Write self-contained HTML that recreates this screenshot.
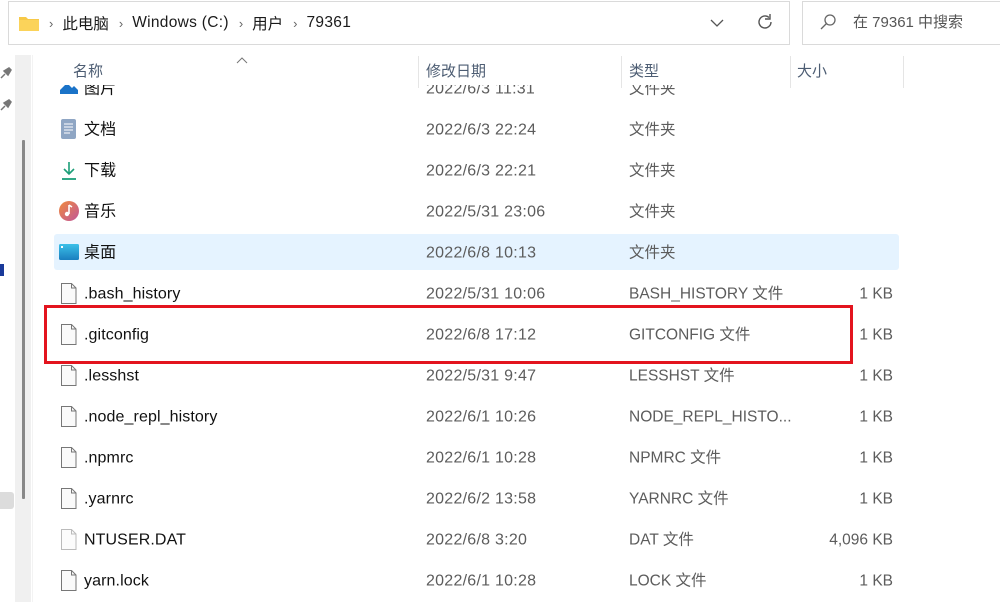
<!DOCTYPE html>
<html><head><meta charset="utf-8"><style>
*{margin:0;padding:0;box-sizing:border-box}
body{width:1000px;height:602px;overflow:hidden;background:#fff;position:relative;font-family:"Liberation Sans","Noto Sans CJK SC",sans-serif;font-size:15px;color:#1a1a1a}
.a{position:absolute}
.row{position:absolute;left:0;width:1000px;height:41px}
.row span{position:absolute;top:50%;transform:translateY(-48%);white-space:nowrap;line-height:20px}
.n{left:84px;color:#111;font-size:16px;letter-spacing:.1px}
.d{left:426px;color:#5c5c5c;font-size:16px;letter-spacing:.25px}
.t{left:629px;color:#5c5c5c;font-size:15.5px}
.s{right:107px;color:#5c5c5c;font-size:15.5px}
.ic{position:absolute;left:60px;top:10px}
.hd{color:#4d5d73;font-size:14px;line-height:20px}
.sep{position:absolute;top:56px;width:1px;height:32px;background:#e5e5e5}
.bc{position:absolute;left:19px;top:1px;height:44px;display:flex;align-items:center;white-space:nowrap;font-size:15.5px}
.bc .g{color:#666;font-size:13px;margin:0 9px 0 10px}
</style></head><body>
<div class="a" style="left:8px;top:1px;width:782px;height:44px;border:1px solid #dadada;background:#fff"></div>
<div class="bc"><svg width="20" height="16" viewBox="0 0 20 16"><path d="M0 2h7l2 2h11v12H0z" fill="#f7c948"/><path d="M0 5h20v11H0z" fill="#fbd35a"/></svg>
<span class="g">›</span><span>此电脑</span><span class="g">›</span><span style="letter-spacing:.3px">Windows (C:)</span><span class="g">›</span><span>用户</span><span class="g">›</span><span style="letter-spacing:.3px">79361</span></div>
<svg class="a" style="left:710px;top:18px" width="14" height="10"><path d="M1 2l6 6 6-6" fill="none" stroke="#555" stroke-width="1.3"/></svg>
<svg class="a" style="left:756px;top:13px" width="18" height="18" viewBox="0 0 18 18"><path d="M15 9a6 6 0 1 1-2-4.5" fill="none" stroke="#555" stroke-width="1.4"/><path d="M14 1v5h-5" fill="none" stroke="#555" stroke-width="1.4"/></svg>
<div class="a" style="left:802px;top:1px;width:210px;height:44px;border:1px solid #dadada"></div>
<svg class="a" style="left:819px;top:13px" width="18" height="18"><circle cx="11" cy="7" r="5" fill="none" stroke="#666" stroke-width="1.3"/><path d="M7.5 10.5L2 16" stroke="#666" stroke-width="1.3"/></svg>
<div class="a" style="left:853px;top:13px;color:#555;font-size:15px;line-height:20px">在 79361 中搜索</div>
<div class="a" style="left:15px;top:55px;width:16px;height:547px;background:#f0f0f0"></div>
<div class="a" style="left:22px;top:140px;width:3px;height:359px;background:#888;border-radius:1px"></div>
<div class="a" style="left:32px;top:55px;width:1px;height:547px;background:#f3f3f3"></div>
<div class="a" style="left:0;top:492px;width:14px;height:17px;background:#dcdcdc;border-radius:0 3px 3px 0"></div>
<div class="a" style="left:0;top:264px;width:4px;height:12px;background:#1a3a9a"></div>
<svg class="a" style="left:0;top:67px" width="12" height="12"><path d="M1 11l4-4M4 4l4 4 3-5-2-2z" stroke="#777" fill="#777" stroke-width="1.5"/></svg>
<svg class="a" style="left:0;top:99px" width="12" height="12"><path d="M1 11l4-4M4 4l4 4 3-5-2-2z" stroke="#777" fill="#777" stroke-width="1.5"/></svg>
<div class="row" style="top:68px"><svg class="ic" width="18" height="18"><path d="M0 12l7-7 5 5 2-2 4 4v4H0z" fill="#1a73c8"/></svg><span class="n">图片</span><span class="d">2022/6/3 11:31</span><span class="t">文件夹</span></div>
<div class="row" style="top:109px"><svg class="ic" width="18" height="20" style="left:61px"><rect x="0" y="0" width="15" height="20" rx="2" fill="#8fa6c4"/><path d="M3 5h9M3 8h9M3 11h9M3 14h6" stroke="#fff" stroke-width="1"/></svg><span class="n">文档</span><span class="d">2022/6/3 22:24</span><span class="t">文件夹</span></div>
<div class="row" style="top:150px"><svg class="ic" width="18" height="20" style="left:61px;top:11px"><path d="M8 1v12M3 8l5 5 5-5" fill="none" stroke="#1c9e78" stroke-width="1.6"/><path d="M1 18h14" stroke="#1c9e78" stroke-width="1.8"/></svg><span class="n">下载</span><span class="d">2022/6/3 22:21</span><span class="t">文件夹</span></div>
<div class="row" style="top:191px"><svg class="ic" width="20" height="20" style="left:59px"><defs><linearGradient id="g" x1="0" y1="0" x2="1" y2="1"><stop offset="0" stop-color="#f08a3c"/><stop offset="1" stop-color="#c0569a"/></linearGradient></defs><circle cx="10" cy="10" r="10" fill="url(#g)"/><path d="M10 4v9" stroke="#fff" stroke-width="1.6"/><circle cx="8" cy="13" r="2.2" fill="#fff"/><path d="M10 4l3 2" stroke="#fff" stroke-width="1.6"/></svg><span class="n">音乐</span><span class="d">2022/5/31 23:06</span><span class="t">文件夹</span></div>
<div class="a" style="left:54px;top:234px;width:845px;height:36px;background:#e5f3ff;border-radius:3px"></div>
<div class="row" style="top:232px"><svg class="ic" width="20" height="16" style="left:59px;top:12px"><defs><linearGradient id="b" x1="0" y1="0" x2="0" y2="1"><stop offset="0" stop-color="#3cc0e8"/><stop offset="1" stop-color="#1a7fbf"/></linearGradient></defs><rect width="20" height="16" rx="1.5" fill="url(#b)"/><rect x="2" y="2" width="2" height="2" fill="#fff"/></svg><span class="n">桌面</span><span class="d">2022/6/8 10:13</span><span class="t">文件夹</span></div>
<div class="row" style="top:273px"><svg class="ic" width="16" height="21" style="left:61px"><path d="M.5.5h10l4.5 4.5v15.5H.5z" fill="#fafafa" stroke="#777"/><path d="M10.5.5v4.5H15" fill="none" stroke="#777"/></svg><span class="n">.bash_history</span><span class="d">2022/5/31 10:06</span><span class="t">BASH_HISTORY 文件</span><span class="s">1 KB</span></div>
<div class="row" style="top:314px"><svg class="ic" width="16" height="21" style="left:61px"><path d="M.5.5h10l4.5 4.5v15.5H.5z" fill="#fafafa" stroke="#777"/><path d="M10.5.5v4.5H15" fill="none" stroke="#777"/></svg><span class="n">.gitconfig</span><span class="d">2022/6/8 17:12</span><span class="t">GITCONFIG 文件</span><span class="s">1 KB</span></div>
<div class="row" style="top:355px"><svg class="ic" width="16" height="21" style="left:61px"><path d="M.5.5h10l4.5 4.5v15.5H.5z" fill="#fafafa" stroke="#777"/><path d="M10.5.5v4.5H15" fill="none" stroke="#777"/></svg><span class="n">.lesshst</span><span class="d">2022/5/31 9:47</span><span class="t">LESSHST 文件</span><span class="s">1 KB</span></div>
<div class="row" style="top:396px"><svg class="ic" width="16" height="21" style="left:61px"><path d="M.5.5h10l4.5 4.5v15.5H.5z" fill="#fafafa" stroke="#777"/><path d="M10.5.5v4.5H15" fill="none" stroke="#777"/></svg><span class="n">.node_repl_history</span><span class="d">2022/6/1 10:26</span><span class="t">NODE_REPL_HISTO...</span><span class="s">1 KB</span></div>
<div class="row" style="top:437px"><svg class="ic" width="16" height="21" style="left:61px"><path d="M.5.5h10l4.5 4.5v15.5H.5z" fill="#fafafa" stroke="#777"/><path d="M10.5.5v4.5H15" fill="none" stroke="#777"/></svg><span class="n">.npmrc</span><span class="d">2022/6/1 10:28</span><span class="t">NPMRC 文件</span><span class="s">1 KB</span></div>
<div class="row" style="top:478px"><svg class="ic" width="16" height="21" style="left:61px"><path d="M.5.5h10l4.5 4.5v15.5H.5z" fill="#fafafa" stroke="#777"/><path d="M10.5.5v4.5H15" fill="none" stroke="#777"/></svg><span class="n">.yarnrc</span><span class="d">2022/6/2 13:58</span><span class="t">YARNRC 文件</span><span class="s">1 KB</span></div>
<div class="row" style="top:519px"><svg class="ic" width="16" height="21" style="left:61px"><path d="M.5.5h10l4.5 4.5v15.5H.5z" fill="#fcfcfc" stroke="#bbb"/><path d="M10.5.5v4.5H15" fill="none" stroke="#bbb"/></svg><span class="n">NTUSER.DAT</span><span class="d">2022/6/8 3:20</span><span class="t">DAT 文件</span><span class="s">4,096 KB</span></div>
<div class="row" style="top:560px"><svg class="ic" width="16" height="21" style="left:61px"><path d="M.5.5h10l4.5 4.5v15.5H.5z" fill="#fafafa" stroke="#777"/><path d="M10.5.5v4.5H15" fill="none" stroke="#777"/></svg><span class="n">yarn.lock</span><span class="d">2022/6/1 10:28</span><span class="t">LOCK 文件</span><span class="s">1 KB</span></div>
<div class="a" style="left:33px;top:50px;width:967px;height:35px;background:#fff"></div>
<svg class="a" style="left:236px;top:57px" width="12" height="7"><path d="M1 6l5-5 5 5" fill="none" stroke="#777" stroke-width="1"/></svg>
<div class="a hd" style="left:73px;top:62px;font-size:15px">名称</div>
<div class="sep" style="left:418px"></div>
<div class="a hd" style="left:426px;top:62px;font-size:15px">修改日期</div>
<div class="sep" style="left:621px"></div>
<div class="a hd" style="left:629px;top:62px;font-size:15px">类型</div>
<div class="sep" style="left:790px"></div>
<div class="a hd" style="left:797px;top:62px;font-size:15px">大小</div>
<div class="sep" style="left:903px"></div>
<div class="a" style="left:44px;top:305px;width:809px;height:59px;border:3px solid #e3141e"></div>
</body></html>
